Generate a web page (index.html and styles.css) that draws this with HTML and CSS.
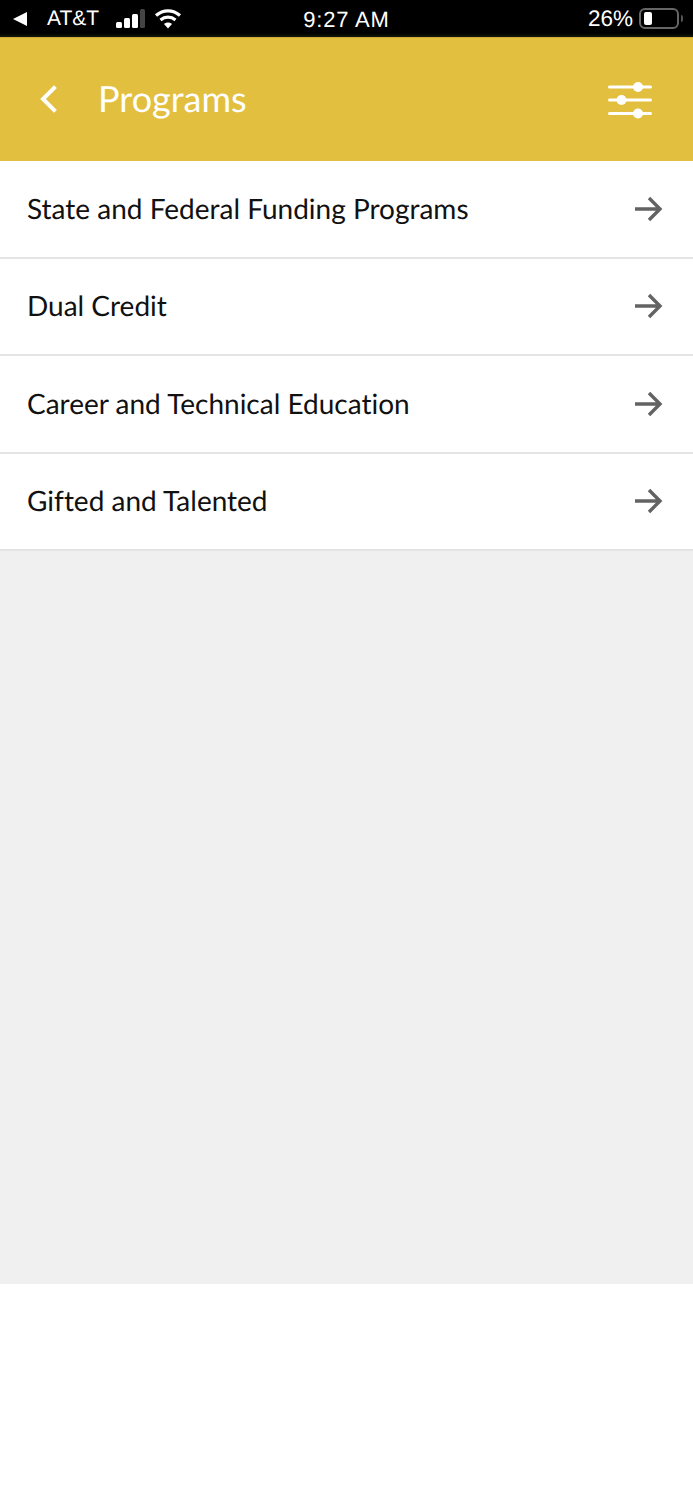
FILE: index.html
```html
<!DOCTYPE html>
<html lang="en">
<head>
  <meta charset="UTF-8">
  <meta name="viewport" content="width=device-width, initial-scale=1.0">
  <title>Programs</title>
  <link rel="stylesheet" href="styles.css">
</head>
<body>
  <div class="status-bar">
    <div class="status-left">
      <svg class="back-triangle" width="15" height="14" viewBox="0 0 15 14"><path d="M14 0v14L0 7z" fill="#fff"/></svg>
      <span class="carrier">AT&amp;T</span>
      <svg class="signal" width="31" height="20" viewBox="0 0 31 20">
        <rect x="1" y="13" width="6" height="6" rx="1.5" fill="#fff"/>
        <rect x="9" y="9" width="6" height="10" rx="1.5" fill="#fff"/>
        <rect x="17" y="5" width="6" height="14" rx="1.5" fill="#fff"/>
        <rect x="25" y="0" width="5" height="19" rx="1.5" fill="#444"/>
      </svg>
      <svg class="wifi" width="28" height="21" viewBox="0 0 28 21" fill="none" stroke="#fff" stroke-width="3.2">
        <path d="M2 7.5C9 1.2 19 1.2 26 7.5"/>
        <path d="M6.5 12C11 8.2 17 8.2 21.500 12"/>
        <path d="M14 20.5l-4-4.500c2.300-2 5.700-2 8 0z" fill="#fff" stroke="none"/>
      </svg>
    </div>
    <span class="clock">9:27 AM</span>
    <div class="status-right">
      <span class="percent">26%</span>
      <div class="battery"><div class="battery-level"></div></div>
      <div class="battery-cap"></div>
    </div>
  </div>

  <header class="app-header">
    <div class="header-left">
      <svg class="back-icon" width="20" height="30" viewBox="0 0 20 30" fill="none" stroke="#fff" stroke-width="4" stroke-linecap="square">
        <path d="M16 4L5 15l11 11"/>
      </svg>
      <h1>Programs</h1>
    </div>
    <svg class="filter-icon" width="46" height="38" viewBox="0 0 46 38" fill="#fff">
      <rect x="1" y="4.500" width="44" height="3" rx="1.500"/>
      <rect x="1" y="17.500" width="44" height="3" rx="1.500"/>
      <rect x="1" y="31" width="44" height="3" rx="1.500"/>
      <circle cx="31" cy="6" r="5"/>
      <circle cx="14.500" cy="19" r="5"/>
      <circle cx="31" cy="32.500" r="5"/>
    </svg>
  </header>

  <ul class="program-list">
    <li class="program-row">State and Federal Funding Programs
      <svg class="arrow" width="30" height="26" viewBox="0 0 30 26" fill="none" stroke="#636363" stroke-width="3.400"><path d="M1 13h25M15 2l11 11-11 11"/></svg>
    </li>
    <li class="program-row">Dual Credit
      <svg class="arrow" width="30" height="26" viewBox="0 0 30 26" fill="none" stroke="#636363" stroke-width="3.400"><path d="M1 13h25M15 2l11 11-11 11"/></svg>
    </li>
    <li class="program-row">Career and Technical Education
      <svg class="arrow" width="30" height="26" viewBox="0 0 30 26" fill="none" stroke="#636363" stroke-width="3.400"><path d="M1 13h25M15 2l11 11-11 11"/></svg>
    </li>
    <li class="program-row">Gifted and Talented
      <svg class="arrow" width="30" height="26" viewBox="0 0 30 26" fill="none" stroke="#636363" stroke-width="3.400"><path d="M1 13h25M15 2l11 11-11 11"/></svg>
    </li>
  </ul>

  <div class="empty-area"></div>
</body>
</html>
```
FILE: styles.css
```css
body {
  margin: 0;
  background: #fff;
  font-family: Lato, "Open Sans", sans-serif;
  font-variant-ligatures: none;
  text-rendering: geometricPrecision;
}

.status-bar {
  height: 37px;
  background: linear-gradient(#000 90%, #141a08);
  color: #fff;
  display: grid;
  grid-template-columns: 1fr auto 1fr;
  align-items: center;
  font-family: "Liberation Sans", Arial, sans-serif;
  font-size: 21px;
}

.status-left {
  display: flex;
  align-items: center;
  padding-left: 13px;
}

.carrier {
  margin-left: 19px;
}

.signal {
  margin-left: 16px;
}

.wifi {
  margin-left: 8px;
}

.clock {
  font-size: 22px;
  letter-spacing: 0.8px;
  padding-top: 2px;
}

.status-right {
  display: flex;
  align-items: center;
  justify-content: flex-end;
  padding-right: 10px;
}

.percent {
  font-size: 22.500px;
  margin-right: 6px;
}

.battery {
  width: 40px;
  height: 21px;
  border: 2px solid #666;
  border-radius: 6px;
  padding: 2px 3px;
  box-sizing: border-box;
}

.battery-level {
  width: 8px;
  height: 100%;
  background: #fff;
  border-radius: 2px;
}

.battery-cap {
  width: 2px;
  height: 7px;
  margin-left: 2px;
  background: #555;
  border-radius: 0 2px 2px 0;
}

.app-header {
  height: 124px;
  background: #e3bf40;
  border-top: 1px solid #d1a93a;
  box-sizing: border-box;
  display: flex;
  align-items: center;
  justify-content: space-between;
  padding: 0 40px 0 38px;
}

.header-left {
  display: flex;
  align-items: center;
}

.app-header h1 {
  margin: 0 0 3px 40px;
  color: #fff;
  font-size: 36px;
  font-weight: 400;
}

.back-icon {
  display: block;
  margin-top: -2px;
}

.program-list {
  list-style: none;
  margin: 0;
  padding: 0;
}

.program-row {
  height: 97.500px;
  box-sizing: border-box;
  display: flex;
  align-items: center;
  justify-content: space-between;
  padding: 0 29px 2px 27px;
  font-size: 28px;
  color: #111;
  background: #fff;
  border-bottom: 2px solid #e4e4e4;
}

.arrow {
  display: block;
  margin-top: 2px;
}

.empty-area {
  height: 733px;
  background: #f0f0f0;
}
```
